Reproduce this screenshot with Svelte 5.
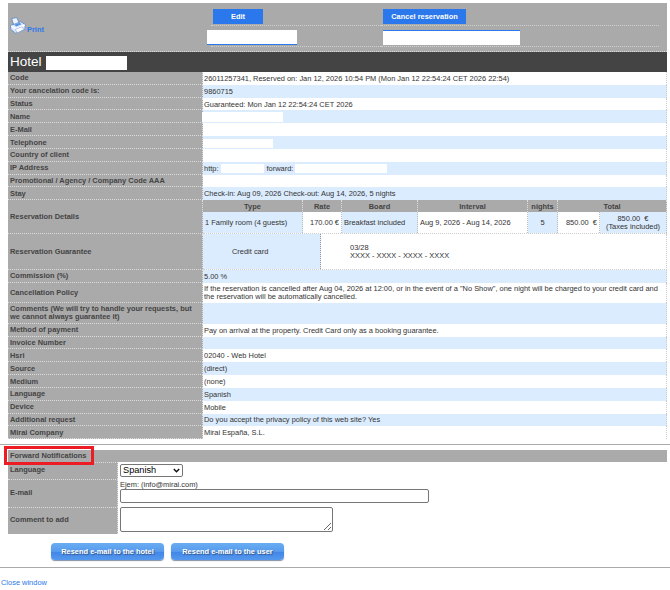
<script>
	const before = [
		{ label: "Code", value: "26011257341, Reserved on: Jan 12, 2026 10:54 PM (Mon Jan 12 22:54:24 CET 2026 22:54)" },
		{ label: "Your cancelation code is:", value: "9860715" },
		{ label: "Status", value: "Guaranteed: Mon Jan 12 22:54:24 CET 2026" },
		{ label: "Name", hidden: "name" },
		{ label: "E-Mail", value: "" },
		{ label: "Telephone", hidden: "phone" },
		{ label: "Country of client", value: "" },
		{ label: "IP Address", ip: true },
		{ label: "Promotional / Agency / Company Code AAA", value: "" },
		{ label: "Stay", value: "Check-in: Aug 09, 2026 Check-out: Aug 14, 2026, 5 nights" }
	];

	const after = [
		{ label: "Method of payment", value: "Pay on arrival at the property. Credit Card only as a booking guarantee." },
		{ label: "Invoice Number", value: "" },
		{ label: "Hsri", value: "02040 - Web Hotel" },
		{ label: "Source", value: "(direct)" },
		{ label: "Medium", value: "(none)" },
		{ label: "Language", value: "Spanish" },
		{ label: "Device", value: "Mobile" },
		{ label: "Additional request", value: "Do you accept the privacy policy of this web site? Yes" },
		{ label: "Mirai Company", value: "Mirai España, S.L." }
	];

	let language = $state("Spanish");
	let email = $state("");
	let comment = $state("");
</script>

<div class="page">
	<div class="booking">
		<header>
			<a class="print" href="#print">
				<svg width="16" height="17" viewBox="0 0 16 17">
					<path d="M1.6 1.6 6.6 .6 9.4 6 4 8.4z" fill="#eef5ff" stroke="#5583cf" stroke-width=".8" />
					<path d="M.6 8.6 10.8 4.7 15.2 7.6 14.9 12.4 5.6 16.2 .8 12.4z" fill="#dce9fc" stroke="#5a86d0" stroke-width=".8" />
					<path d="M1.2 9 5.8 11.9 14.6 8" fill="none" stroke="#fff" stroke-width="1.6" />
					<path d="M4.2 7.8 9.6 5.7 11.6 7.2 6.2 9.6z" fill="#5b94df" />
					<path d="M5.2 12.5 11.8 9.8 14 12.4 7.4 15.8z" fill="#fff" stroke="#7da2de" stroke-width=".6" />
				</svg>
				<span>Print</span>
			</a>
			<div class="actions">
				<div class="action"><button class="edit">Edit</button></div>
				<div class="action"><button class="cancel">Cancel reservation</button></div>
				<div class="action"><span class="mask first"></span></div>
				<div class="action"><span class="mask second"></span></div>
			</div>
		</header>
		<h1>Hotel <span class="mask"></span></h1>

		{#each before as row, n}
			<div class="row" class:blue={n % 2 === 1}>
				<div class="label">{row.label}</div>
				<div class="value">
					{#if row.ip}
						http:<span class="mask http"></span><span class="fwd">forward:</span><span class="mask forward"></span>
					{:else if row.hidden}
						<span class="mask {row.hidden}"></span>
					{:else}
						<span>{row.value}</span>
					{/if}
				</div>
			</div>
		{/each}

		<div class="row details">
			<div class="label">Reservation Details</div>
			<div class="rooms">
				<div class="th">Type</div>
				<div class="th">Rate</div>
				<div class="th">Board</div>
				<div class="th">Interval</div>
				<div class="th">nights</div>
				<div class="th total">Total</div>
				<div class="td blue">1 Family room (4 guests)</div>
				<div class="td right">170.00 €</div>
				<div class="td blue">Breakfast included</div>
				<div class="td">Aug 9, 2026 - Aug 14, 2026</div>
				<div class="td blue center">5</div>
				<div class="td right">850.00 &nbsp;€</div>
				<div class="td blue center">850.00 &nbsp;€<br />(Taxes included)</div>
			</div>
		</div>
		<div class="row guarantee">
			<div class="label">Reservation Guarantee</div>
			<div class="card">
				<div class="card-type">Credit card</div>
				<div class="card-number">03/28<br />XXXX - XXXX - XXXX - XXXX</div>
			</div>
		</div>
		<div class="row blue">
			<div class="label">Commission (%)</div>
			<div class="value">5.00 %</div>
		</div>
		<div class="row policy">
			<div class="label">Cancellation Policy</div>
			<div class="value">
				<span>If the reservation is cancelled after Aug 04, 2026 at 12:00, or in the event of a "No Show", one night will be charged to your credit card and<br />the reservation will be automatically cancelled.</span>
			</div>
		</div>
		<div class="row blue comments">
			<div class="label">Comments (We will try to handle your requests, but<br />we cannot always guarantee it)</div>
			<div class="value"></div>
		</div>

		{#each after as row, n}
			<div class="row" class:blue={n % 2 === 1}>
				<div class="label">{row.label}</div>
				<div class="value"><span>{row.value}</span></div>
			</div>
		{/each}
	</div>

	<hr />

	<form onsubmit={(e) => e.preventDefault()}>
		<div class="title"><span>Forward Notifications</span></div>
		<div class="field language">
			<label for="language">Language</label>
			<div class="select">
				<select id="language" bind:value={language}>
					<option>Spanish</option>
					<option>English</option>
				</select>
				<svg width="7" height="5" viewBox="0 0 7 5"><path d="M.8 1 3.5 3.7 6.2 1" fill="none" stroke="#111" stroke-width="1.5" /></svg>
			</div>
		</div>
		<div class="field email">
			<label for="email">E-mail</label>
			<div class="control">
				<span>Ejem: (info@mirai.com)</span>
				<input id="email" bind:value={email} />
			</div>
		</div>
		<div class="field comment">
			<label for="comment">Comment to add</label>
			<textarea id="comment" bind:value={comment}></textarea>
		</div>
		<div class="buttons">
			<button>Resend e-mail to the hotel</button>
			<button>Resend e-mail to the user</button>
		</div>
	</form>

	<hr />
	<a class="close" href="#close">Close window</a>
</div>

<style>
	:global(body) {
		background: #fff;
		overflow: hidden;
	}

	.page {
		height: 590px;
		overflow: hidden;
		font: 7.45px/8px "Liberation Sans", Arial, sans-serif;
		color: #333;
	}

	.page *,
	.page *::after {
		box-sizing: border-box;
	}

	a {
		color: #2b78ec;
		text-decoration: none;
	}

	.booking {
		margin: 0 3px 0 8px;
		padding-top: 3px;
	}

	header {
		display: flex;
		height: 49px;
		background: #aaa;
		border-bottom: 1px dotted #ddd;
	}

	.print {
		display: flex;
		width: 203px;
		padding: 14px 0 0 2px;
		font-weight: bold;
	}

	.print span {
		padding: 9px 0 0 1px;
	}

	.actions {
		display: grid;
		grid-template-columns: 170px 278px;
		grid-template-rows: 23px 21px;
	}

	.action {
		border-bottom: 1px dotted #d0d0d0;
		padding: 6px 0 0 2px;
	}

	.action button {
		display: block;
		height: 15px;
		padding: 0;
		border: 0;
		background: #2b78ec;
		color: #fff;
		font: bold 7.45px/15px "Liberation Sans", Arial, sans-serif;
	}

	.edit {
		width: 50px;
	}

	.cancel {
		width: 83px;
	}

	.mask {
		display: inline-block;
		flex: none;
		background: #fff;
	}

	.first {
		width: 90px;
		height: 15px;
		margin: -2px 0 0 -6px;
		border-bottom: 1px solid #2b78ec;
	}

	.second {
		width: 137px;
		height: 15px;
		margin-top: -2px;
		border-top: 1px solid #2b78ec;
	}

	h1 {
		display: flex;
		height: 20px;
		margin: 0;
		padding-left: 2px;
		background: #444;
		color: #fff;
		font-size: 13.5px;
		font-weight: normal;
		line-height: 20px;
	}

	h1 .mask {
		width: 81px;
		height: 14px;
		margin: 4px 0 0 4px;
	}

	.row {
		display: grid;
		grid-template-columns: 195px 1fr;
		height: 12.84px;
	}

	.label {
		display: flex;
		align-items: center;
		padding: 1px 0 0 2px;
		background: #aaa;
		border-right: 1px dotted #ddd;
		border-bottom: 1px dotted #ddd;
		color: #444;
		font-weight: bold;
		white-space: nowrap;
	}

	.value {
		display: flex;
		align-items: center;
		padding: 1px 0 0 1px;
		border-right: 1px dotted #ccc;
		white-space: nowrap;
	}

	.blue .value,
	.td.blue {
		background: #dbecfe;
	}

	.name {
		width: 81px;
		height: 10px;
		margin: -1px 0 0 -2px;
	}

	.phone {
		width: 70px;
		height: 9px;
		margin-left: -1px;
	}

	.http {
		width: 43px;
		height: 9px;
		margin-left: 3px;
	}

	.fwd {
		margin-left: 2px;
	}

	.forward {
		width: 92px;
		height: 9px;
		margin-left: 2px;
	}

	.details {
		height: 33.3px;
	}

	.rooms {
		display: grid;
		grid-template-columns: 100px 39px 76px 110px 30px 42px 67px;
		grid-template-rows: 12px 1fr;
		border-bottom: 1px dotted #ccc;
	}

	.th {
		background: #aaa;
		border-right: 1px dotted #ddd;
		color: #444;
		font-weight: bold;
		line-height: 13px;
		text-align: center;
	}

	.total {
		grid-column: span 2;
	}

	.td {
		display: flex;
		align-items: center;
		padding: 1px 2px 0;
		border-right: 1px dotted #bbb;
		white-space: nowrap;
	}

	.right {
		justify-content: flex-end;
	}

	.center {
		justify-content: center;
		text-align: center;
	}

	.guarantee {
		height: 36.2px;
	}

	.card {
		display: grid;
		grid-template-columns: 118px 1fr;
		border-right: 1px dotted #ccc;
		border-bottom: 1px dotted #ccc;
	}

	.card-type {
		display: flex;
		align-items: center;
		padding: 1px 0 0 29px;
		background: #dbecfe;
		border-right: 1px dotted #999;
	}

	.card-number {
		display: flex;
		align-items: center;
		padding: 1px 0 0 29px;
	}

	.policy {
		height: 20.5px;
	}

	.comments {
		height: 20.7px;
	}

	hr {
		height: 1px;
		margin: 5px 0 0;
		border: 0;
		background: #aaa;
	}

	form {
		height: 117px;
		margin: 0 3px 0 8px;
		padding-top: 5px;
	}

	.title {
		position: relative;
		height: 12px;
		padding-left: 2px;
		background: #aaa;
		color: #444;
		font-weight: bold;
		line-height: 12px;
	}

	/* highlight frame drawn over the section title */
	.title::after {
		content: "";
		position: absolute;
		left: -4px;
		top: -4px;
		width: 90px;
		height: 19px;
		border: 3px solid #ed1c24;
	}

	.field {
		display: grid;
		grid-template-columns: 110px 1fr;
		column-gap: 2px;
	}

	label {
		display: flex;
		align-items: center;
		padding: 0 0 2px 2px;
		background: #aaa;
		border-top: 1px dotted #ddd;
		border-right: 1px dotted #ddd;
		color: #444;
		font-weight: bold;
	}

	.language {
		height: 17px;
	}

	.email {
		height: 28px;
	}

	.comment {
		height: 27px;
	}

	.select {
		display: flex;
		align-items: center;
		width: 63px;
		height: 13px;
		margin-top: 2px;
		border: 1px solid #767676;
		border-radius: 2px;
	}

	select {
		width: 52px;
		height: 11px;
		padding: 0 0 0 2px;
		border: 0;
		appearance: none;
		background: none;
		color: #000;
		font: 9.2px/11px "Liberation Sans", Arial, sans-serif;
	}

	.control {
		display: flex;
		flex-direction: column;
		padding-top: 2px;
	}

	input {
		width: 309px;
		height: 14px;
		border: 1px solid #767676;
		border-radius: 2px;
	}

	textarea {
		width: 213px;
		height: 25px;
		border: 1px solid #767676;
		border-radius: 2px;
	}

	.buttons {
		display: flex;
		gap: 7px;
		padding: 9px 0 0 43px;
	}

	.buttons button {
		width: 113px;
		height: 17px;
		padding: 0 0 1px;
		border: 0;
		border-radius: 4px;
		background: linear-gradient(#69adf3, #579aec 50%, #4186e8 52%, #5498ee);
		box-shadow: 0 1px 1px #8391a5;
		color: #fff;
		font: bold 7.45px/15px "Liberation Sans", Arial, sans-serif;
		text-shadow: 1px 1px 1px #34557f;
	}

	.close {
		display: block;
		margin: 11px 0 0 1px;
	}
</style>
